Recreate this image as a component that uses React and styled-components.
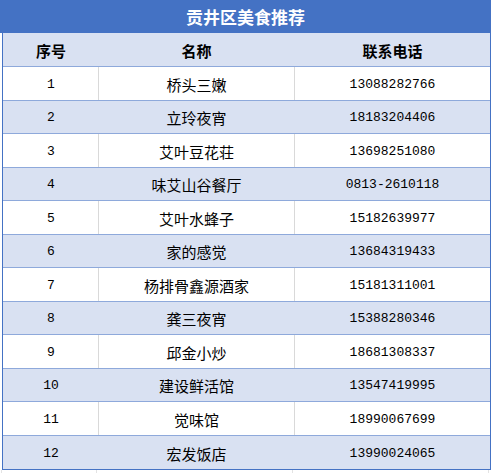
import React from 'react';
import styled, { createGlobalStyle } from 'styled-components';

const GlobalStyle = createGlobalStyle`
  html, body {
    margin: 0;
    padding: 0;
    background: #fff;
  }
`;

const restaurants = [
  { id: 1, name: '桥头三嫩', phone: '13088282766' },
  { id: 2, name: '立玲夜宵', phone: '18183204406' },
  { id: 3, name: '艾叶豆花荘', phone: '13698251080' },
  { id: 4, name: '味艾山谷餐厅', phone: '0813-2610118' },
  { id: 5, name: '艾叶水蜂子', phone: '15182639977' },
  { id: 6, name: '家的感觉', phone: '13684319433' },
  { id: 7, name: '杨排骨鑫源酒家', phone: '15181311001' },
  { id: 8, name: '龚三夜宵', phone: '15388280346' },
  { id: 9, name: '邱金小炒', phone: '18681308337' },
  { id: 10, name: '建设鲜活馆', phone: '13547419995' },
  { id: 11, name: '觉味馆', phone: '18990067699' },
  { id: 12, name: '宏发饭店', phone: '13990024065' },
];

const Sheet = styled.div`
  width: 493px;
  height: 473px;
  overflow: hidden;
  font-family: "Noto Sans CJK SC", sans-serif;
  color: #000;
`;

const TitleBar = styled.div`
  width: 491px;
  height: 33px;
  background: #4472c4;
  color: #fff;
  font-size: 17px;
  font-weight: 700;
  display: flex;
  align-items: center;
  justify-content: center;
`;

const Table = styled.div`
  margin-left: 2px;
  width: 487px;
  border-left: 1px solid #4472c4;
  border-right: 1px solid #4472c4;
  border-bottom: 1px solid #4472c4;
`;

const Row = styled.div`
  display: grid;
  grid-template-columns: 95px 196px 196px;
  height: ${p => p.$h}px;
  box-sizing: border-box;
  background: ${p => (p.$shaded ? '#d9e1f2' : '#fff')};
  border-bottom: ${p => (p.$last ? 'none' : '1px solid #8ea9db')};
`;

const Cell = styled.div`
  display: flex;
  align-items: center;
  justify-content: center;
  padding-top: 1px;
  font-size: 15px;
  font-weight: ${p => (p.$head ? 700 : 400)};
  border-left: 1px solid ${p => (p.$divider ? '#d9d9d9' : 'transparent')};
  white-space: nowrap;
`;

const Digits = styled.span`
  font-family: "Liberation Mono", "Noto Sans CJK SC", monospace;
  font-size: 13px;
`;

const BelowGrid = styled.div`
  display: grid;
  grid-template-columns: 2px 95px 196px 196px;
  height: 10px;
`;

const GridLine = styled.div`
  border-right: 1px solid #e3e3e3;
`;

export default function App() {
  return (
    <Sheet>
      <GlobalStyle />
      <TitleBar>贡井区美食推荐</TitleBar>
      <Table>
        <Row $h={34} $shaded>
          <Cell $head>序号</Cell>
          <Cell $head>名称</Cell>
          <Cell $head>联系电话</Cell>
        </Row>
        {restaurants.map((r, i) => {
          const shaded = i % 2 === 1;
          return (
            <Row
              key={r.id}
              $h={i % 2 === 0 ? 34 : 33}
              $shaded={shaded}
              $last={i === restaurants.length - 1}
            >
              <Cell><Digits>{r.id}</Digits></Cell>
              <Cell $divider={!shaded}>{r.name}</Cell>
              <Cell $divider={!shaded}><Digits>{r.phone}</Digits></Cell>
            </Row>
          );
        })}
      </Table>
      <BelowGrid>
        <GridLine />
        <GridLine />
        <GridLine />
        <GridLine />
      </BelowGrid>
    </Sheet>
  );
}
